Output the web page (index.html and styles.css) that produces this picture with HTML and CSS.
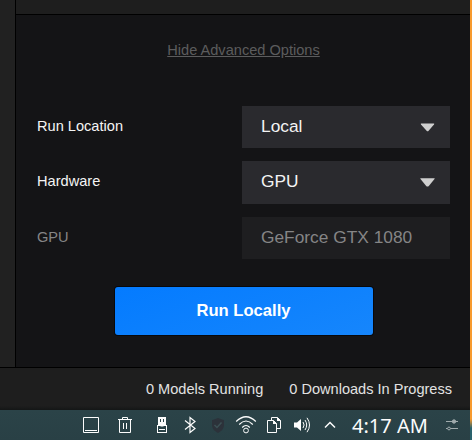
FILE: index.html
```html
<!DOCTYPE html>
<html lang="en">
<head>
<meta charset="utf-8">
<title>Run options</title>
<link rel="stylesheet" href="styles.css">
</head>
<body>
<div class="desktop">
  <div class="window">
    <div class="workspace">
      <aside class="rail"></aside>
      <section class="content">
        <div class="header"></div>
        <main class="panel">
          <a class="toggle">Hide Advanced Options</a>
          <div class="fields">
            <div class="row"><span class="label">Run Location</span>
              <div class="select"><span>Local</span><svg class="caret" width="15" height="9" viewBox="0 0 15 9"><path d="M1.2.6h12.6q.8 0 .2.8L8.6 7.7q-1 1.1-2 0L1 1.4Q.4.6 1.2.6z"/></svg></div></div>
            <div class="row tall"><span class="label">Hardware</span>
              <div class="select"><span>GPU</span><svg class="caret" width="15" height="9" viewBox="0 0 15 9"><path d="M.8.2h13.4q1 0 .3.9L8.8 8q-1.3 1.2-2.6 0L.5 1.1Q-.2.2.8.2z"/></svg></div></div>
            <div class="row disabled"><span class="label">GPU</span>
              <div class="select"><span>GeForce GTX 1080</span></div></div>
          </div>
          <button class="run">Run Locally</button>
        </main>
      </section>
    </div>
    <footer class="status"><span>0 Models Running</span><span>0 Downloads In Progress</span></footer>
  </div>
  <div class="wallpaper"></div>
  <div class="taskbar">
    <div class="tray">
      <svg class="icon first" viewBox="0 0 22 22"><path d="M3.5 3.5h15v15h-15zM5 16.5h12"/></svg>
      <svg class="icon second" viewBox="0 0 22 22"><path d="M4 5.5h14M8.5 5V3.5h5V5M5.5 6v12.5h11V6M9.5 9v6M12.5 9v6"/></svg>
      <svg class="icon" viewBox="0 0 22 22"><path class="solid" fill-rule="evenodd" d="M7 3h8v7H7zM9 5v3h1V5zM12 5v3h1V5z"/><path class="solid" fill-rule="evenodd" d="M6 11h10v8H6zM7 12v6h8v-6z"/><path d="M7 10.500h8M8 15.500h6"/><path d="M9.500 12.500h3" opacity=".5"/></svg>
      <svg class="icon" viewBox="0 0 22 22"><path d="M6 6.500l10 8-5 4V3.500l5 4-10 8" stroke-width="1.200"/></svg>
      <svg class="icon shield" viewBox="0 0 22 22"><path class="solid" d="M11 4l6 2.300v5q0 4.700-6 7.700-6-3-6-7.700v-5z"/><path class="check" d="M7.500 11l2.500 2.500 4.500-5"/></svg>
      <svg class="icon" viewBox="0 0 22 22"><path d="M1.200 7.500Q11-2 20.800 7.500M4.200 10.500q6.800-7 13.600 0M7.200 13.500q3.800-4 7.600 0" stroke-width="1.200"/><circle cx="11" cy="16.500" r="2.400"/></svg>
      <svg class="icon" viewBox="0 0 22 22"><path d="M8.500 6V3.500h6l3 3v8H14M4.500 6.500h6l3 3v9h-9z"/><path class="solid" d="M10 6v4h4zM14 3v4h4z"/></svg>
      <svg class="icon" viewBox="0 0 22 22"><path class="solid" d="M3 8.500h3L10 5v12l-4-3.500H3z"/><path d="M12 8q2.200 3 0 6M14 6q3.400 5 0 10M16 3.800q5 7.200 0 14.400"/></svg>
      <svg class="icon" viewBox="0 0 22 22"><path d="M6 13.500l5-5 5 5" stroke-width="1.500"/></svg>
    </div>
    <time class="clock">4:17 AM</time>
    <svg class="sliders" viewBox="0 0 14 14"><path d="M1 3.500h12M1 10.500h1.500M5.500 10.500H13"/><circle class="knob" cx="9" cy="3.500" r="1.700"/><circle cx="4" cy="10.500" r="1.400"/></svg>
  </div>
</div>
</body>
</html>
```
FILE: styles.css
```css
* { box-sizing: border-box; }
body { margin: 0; overflow: hidden; font-family: "Liberation Sans", Arial, sans-serif; font-size: 14.6px; color: #f4f4f4; }
.desktop { width: 472px; height: 440px; display: grid; grid-template-columns: 470px 2px; grid-template-rows: 410px 30px; background: #2a4247; }
.window { display: flex; flex-direction: column; background: #1e1e1e; }
.workspace { display: flex; height: 367px; }
.rail { width: 16px; background: #212121; border-right: 1px solid #000; }
.content { flex: 1; display: flex; flex-direction: column; }
.header { height: 15px; background: #1e1e1e; border-bottom: 1px solid #000; }
.panel { flex: 1; background: #141416; display: flex; flex-direction: column; align-items: center; padding: 27px 20px 0 21px; }
.toggle { line-height: 17px; color: #5c5c5d; text-decoration: underline; }
.fields { width: 100%; margin-top: 47px; display: flex; flex-direction: column; gap: 13px; }
.row { display: flex; align-items: center; justify-content: space-between; height: 42px; }
.row.tall { height: 43px; }
.label { padding-bottom: 2px; }
.tall .label { padding-bottom: 4px; }
.select { width: 208px; height: 100%; padding: 0 15px 2px 19px; display: flex; align-items: center; justify-content: space-between; background: #2a2a2e; font-size: 17.33px; }
.caret { fill: #cfcfcf; margin-top: 2px; }
.disabled { color: #858586; }
.disabled .select { background: #1e1e20; }
.run { width: 258px; height: 48px; margin-top: 28px; padding: 0 0 1px; border: 0; border-radius: 3px; background: linear-gradient(160deg, #047bff, #1686fc); box-shadow: 0 0 0 1px #08090c; color: #fff; font: bold 16.6px "Liberation Sans", Arial, sans-serif; }
.status { flex: 1; display: flex; justify-content: flex-end; align-items: center; gap: 26px; padding: 0 18px 1px 0; border-top: 1px solid #000; color: #e2e2e2; background: linear-gradient(#1e1e1e 90%, #141616); font-size: 14.57px; }
.wallpaper { background: #f79a2e; }
.taskbar { grid-column: 1 / 3; display: flex; align-items: center; background: linear-gradient(#f79a2e 9px, #2a626c 18px) right / 2px 100% no-repeat, linear-gradient(#2b4348, #294045); }
.tray { display: flex; gap: 6px; padding-left: 80px; }
.icon { width: 22px; height: 22px; fill: none; stroke: #fcfcfc; }
.first { margin-right: 6px; }
.second { margin-right: 9px; }
.solid { fill: #fcfcfc; stroke: none; }
.shield .solid { fill: #2c323a; }
.shield .check { stroke: #3c5054; stroke-width: 1.5px; }
.clock { margin-left: 11px; padding-top: 2px; width: 76px; font: 20px/30px "Noto Sans", sans-serif; color: #fcfcfc; white-space: nowrap; }
.sliders { width: 14px; height: 14px; margin-left: 17px; fill: none; stroke: #a0abad; }
.knob { fill: #a0abad; }
```
